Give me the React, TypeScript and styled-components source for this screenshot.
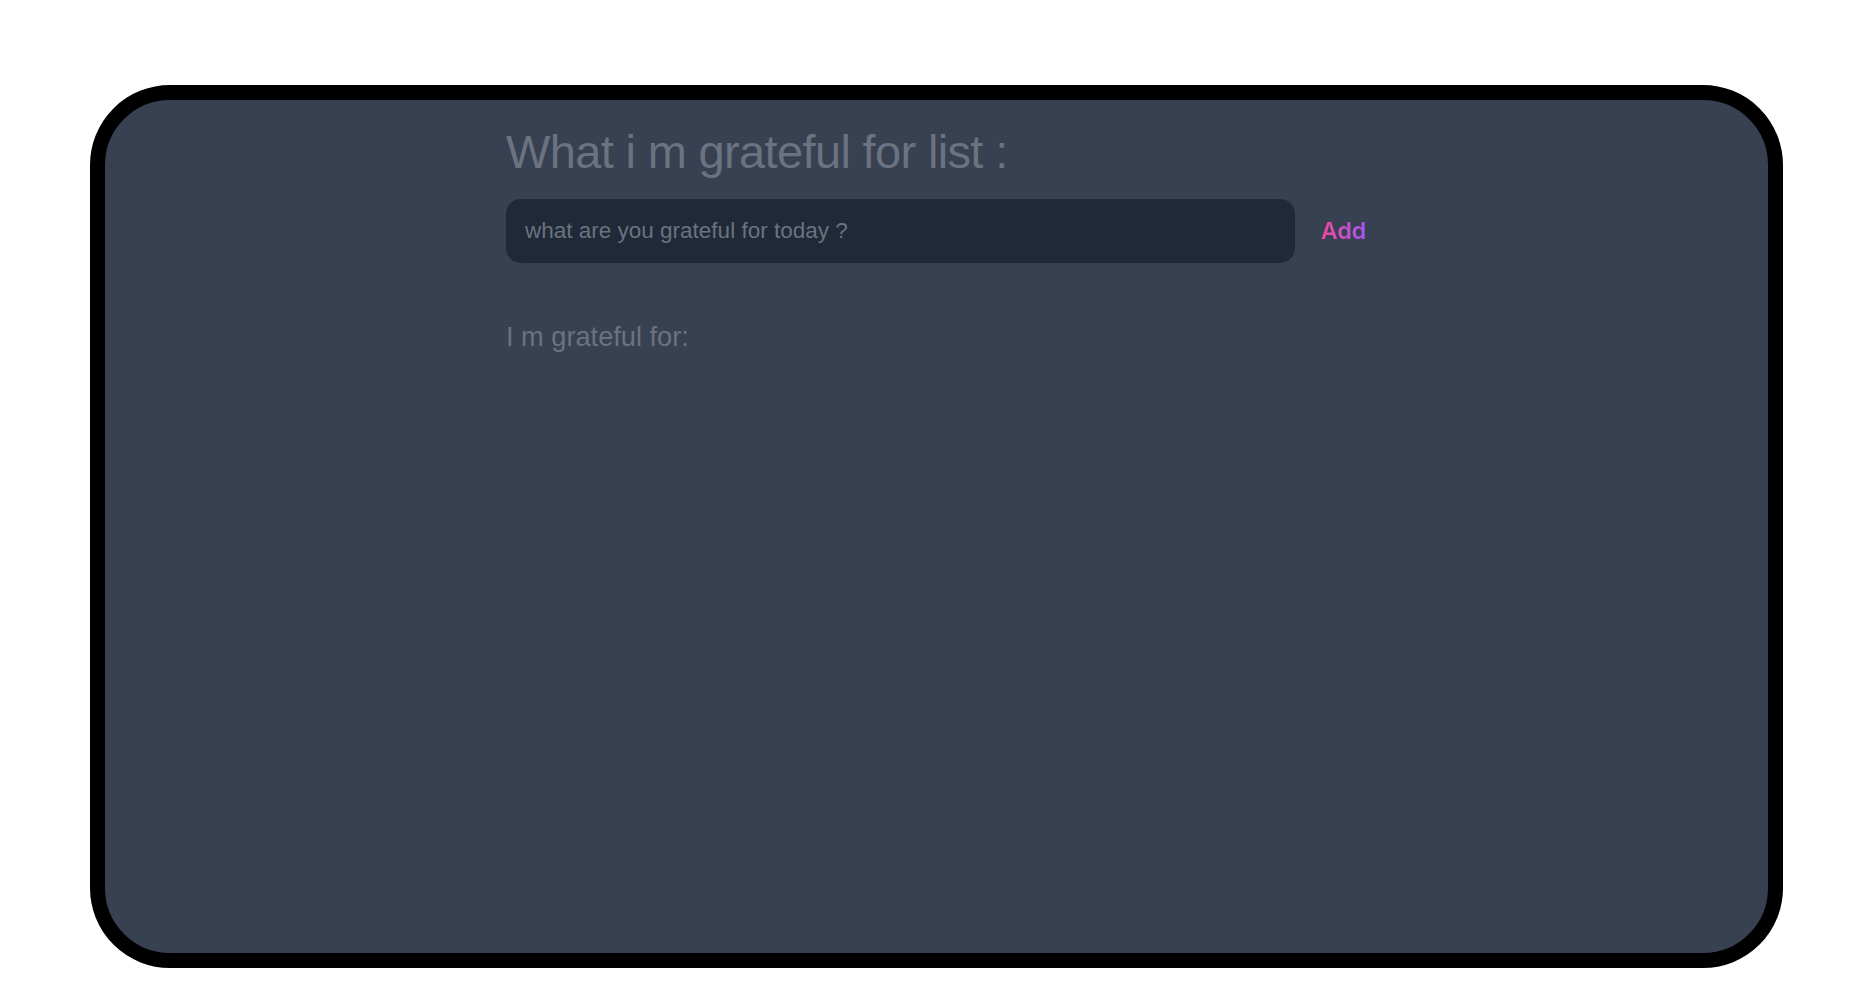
import React from "react";
import styled, { createGlobalStyle } from "styled-components";

const Global = createGlobalStyle`
  html, body { margin: 0; padding: 0; background: #ffffff; }
  body { font-family: "Liberation Sans", Arial, sans-serif; }
`;

const Page = styled.div`
  width: 1857px;
  height: 1000px;
  box-sizing: border-box;
  padding: 85px 74px 32px 90px;
`;

const Card = styled.div`
  width: 100%;
  height: 100%;
  box-sizing: border-box;
  border: 15px solid #000000;
  border-radius: 80px;
  background: #374151;
  display: flex;
  justify-content: center;
`;

const Column = styled.div`
  width: 861px;
  padding-top: 24px;
  display: flex;
  flex-direction: column;
`;

const Title = styled.h1`
  margin: 0;
  font-family: "Liberation Sans", Arial, sans-serif;
  font-weight: 400;
  font-size: 47px;
  letter-spacing: -0.65px;
  line-height: 55px;
  color: #6b7280;
`;

const Form = styled.div`
  margin-top: 20px;
  display: flex;
  align-items: center;
  gap: 26px;
`;

const Input = styled.input`
  width: 789px;
  height: 64px;
  box-sizing: border-box;
  border: none;
  outline: none;
  border-radius: 15px;
  background: #1f2937;
  padding: 0 19px;
  font-family: "Liberation Sans", Arial, sans-serif;
  font-size: 22.5px;
  color: #9ca3af;
  &::placeholder { color: #6b7280; }
`;

const AddButton = styled.button`
  border: none;
  background: linear-gradient(90deg, #ec4899, #a855f7);
  -webkit-background-clip: text;
  background-clip: text;
  color: transparent;
  padding: 0;
  font-family: Inter, "Liberation Sans", Arial, sans-serif;
  font-weight: 600;
  font-size: 23px;
  cursor: pointer;
`;

const Subtitle = styled.h2`
  margin: 58px 0 0;
  font-family: "Liberation Sans", Arial, sans-serif;
  font-weight: 400;
  font-size: 27.2px;
  line-height: 32px;
  color: #6b7280;
`;

export default function App() {
  return (
    <>
      <Global />
      <Page>
        <Card>
          <Column>
            <Title>What i m grateful for list :</Title>
            <Form>
              <Input placeholder="what are you grateful for today ?" />
              <AddButton>Add</AddButton>
            </Form>
            <Subtitle>I m grateful for:</Subtitle>
          </Column>
        </Card>
      </Page>
    </>
  );
}
